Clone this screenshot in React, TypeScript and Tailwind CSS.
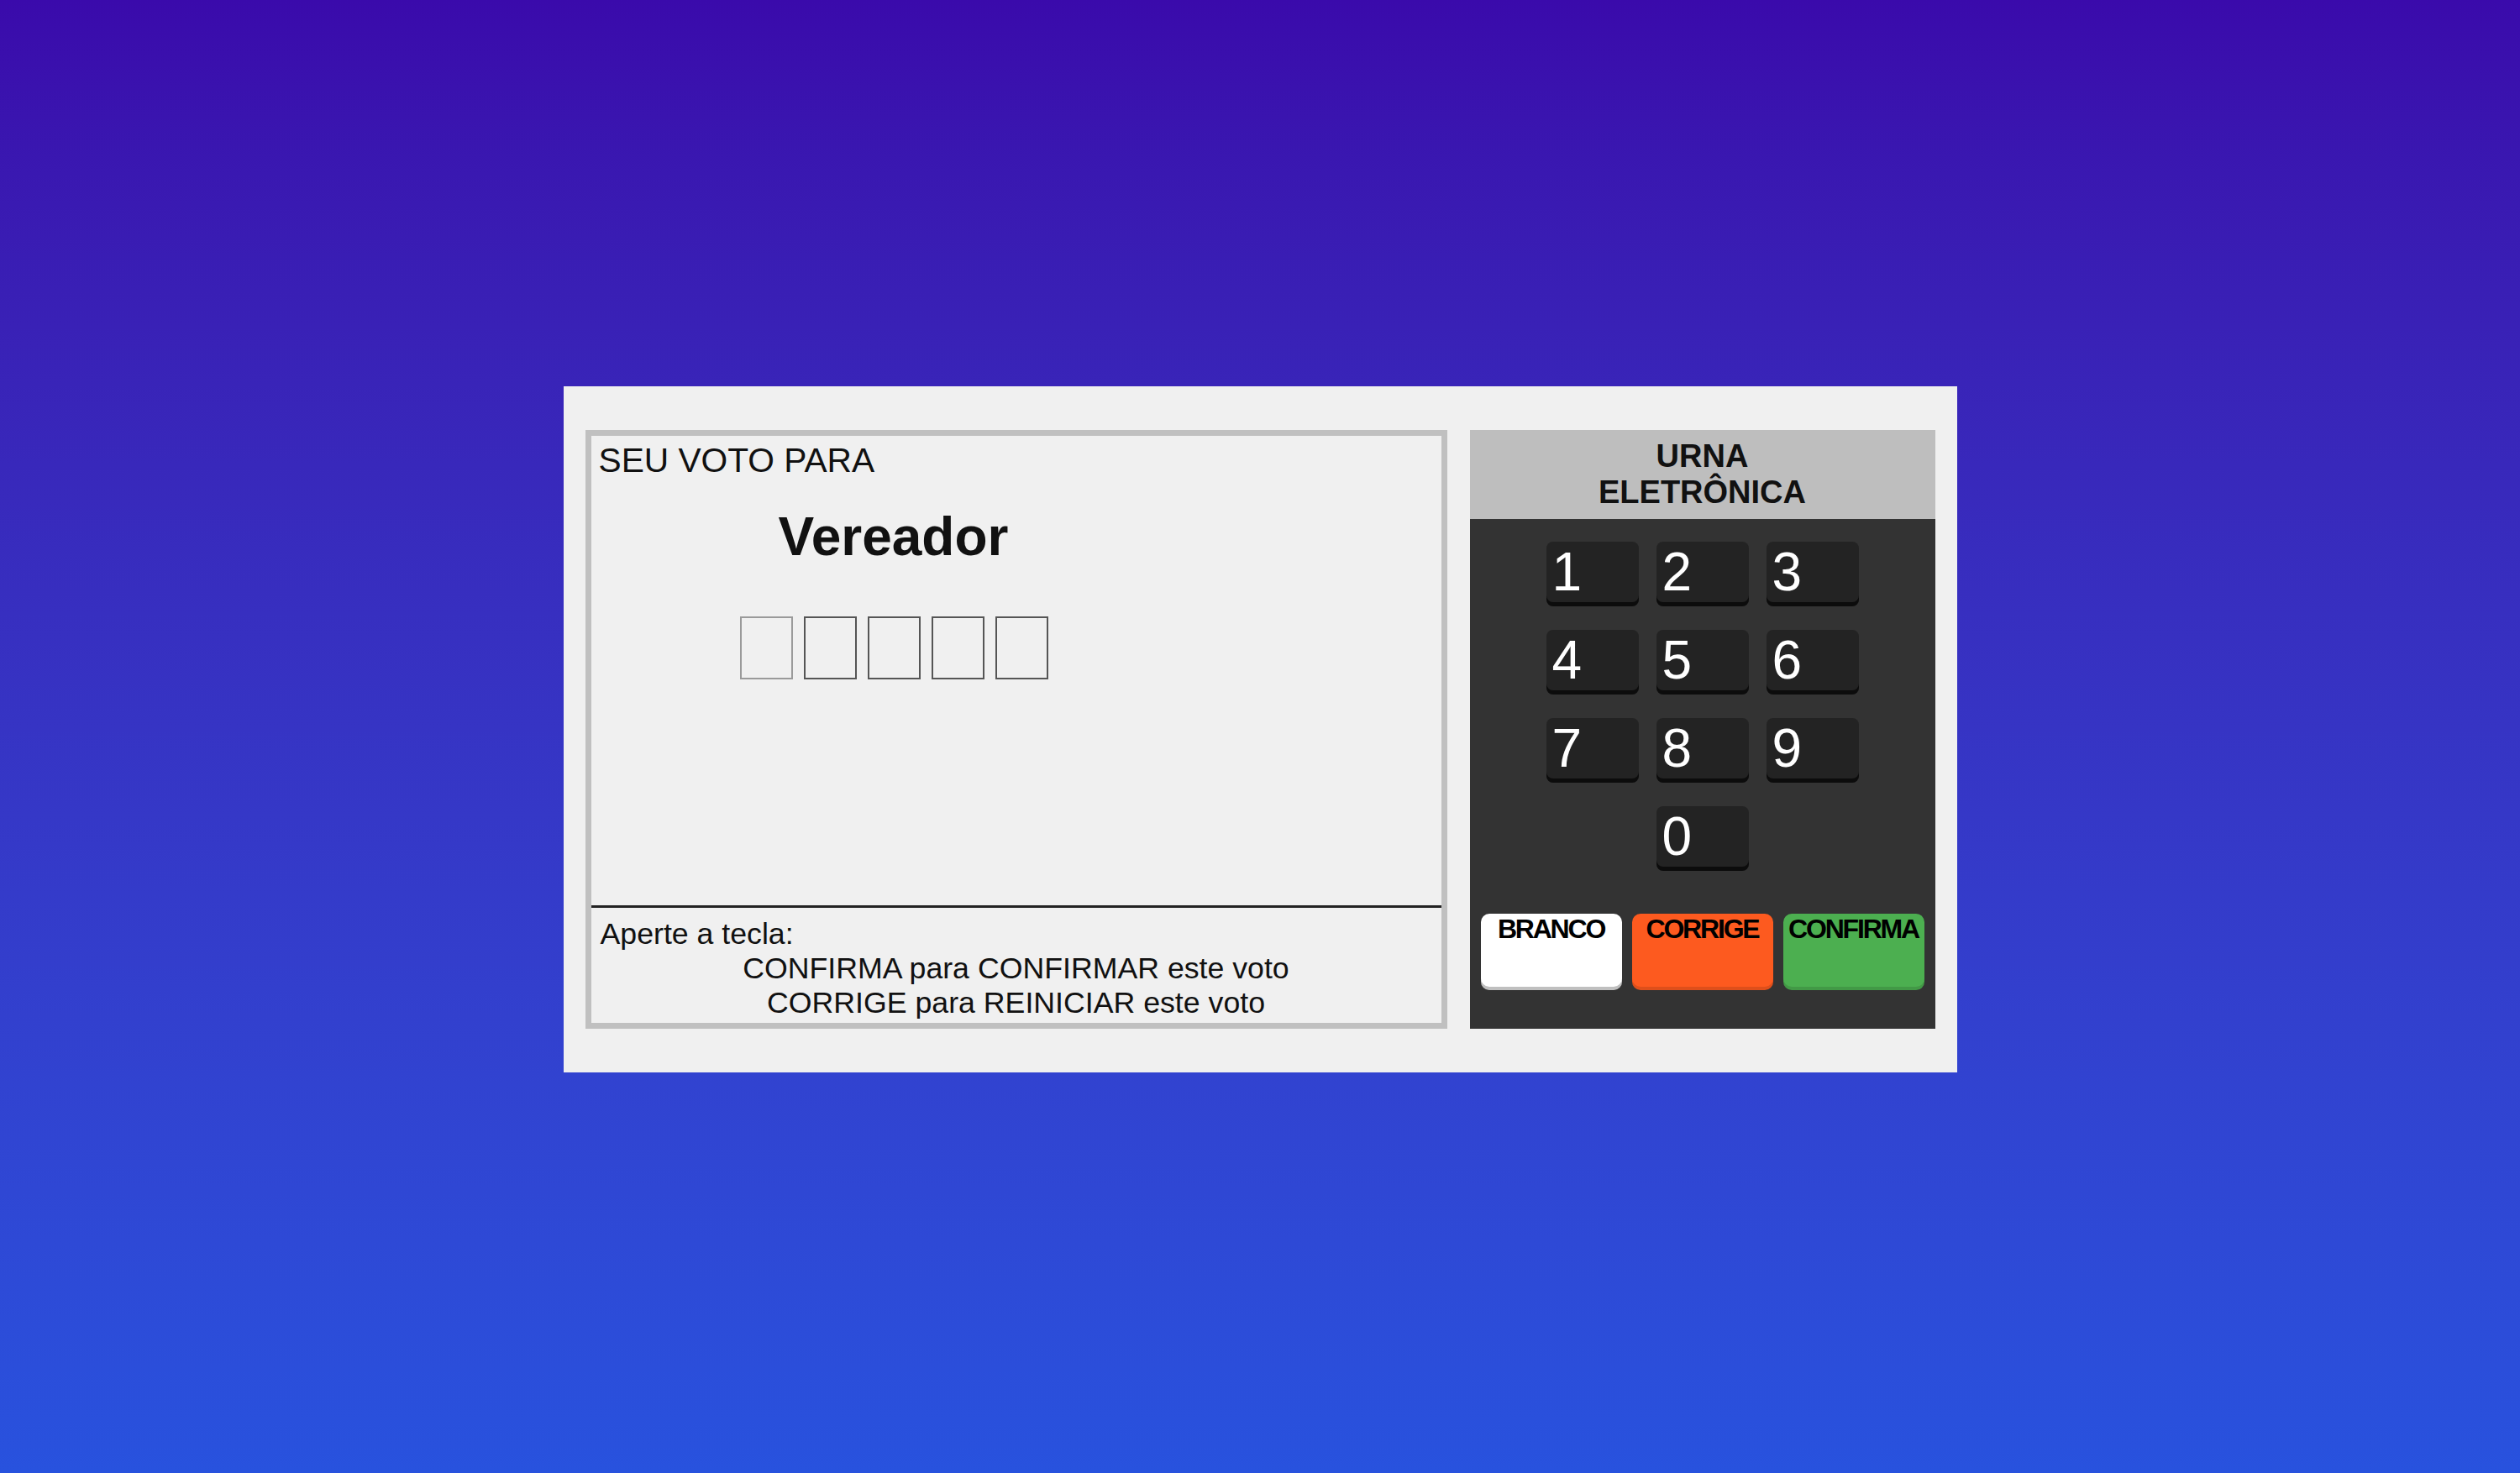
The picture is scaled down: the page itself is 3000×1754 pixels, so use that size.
import React from "react";

const font = { fontFamily: '"Liberation Sans", Arial, sans-serif' };

function Key({ n, className = "" }: { n: string; className?: string }) {
  return (
    <div
      className={
        "h-[77px] rounded-[8px] bg-[#232323] text-white text-[64px] leading-[73px] pl-[7px] shadow-[inset_0_-5px_0_rgba(0,0,0,0.65)] " +
        className
      }
    >
      {n}
    </div>
  );
}

export default function App() {
  return (
    <div
      className="min-h-screen w-full flex items-center justify-center pb-[17px] bg-gradient-to-b from-[#3a0aab] to-[#2852de]"
      style={font}
    >
      <div className="flex gap-[27px] bg-[#f0f0f0] px-[26px] py-[52px]">
        {/* Screen */}
        <div className="w-[1026px] h-[713px] border-[7px] border-[#c0c0c0] bg-[#f0f0f0] flex flex-col text-[#111]">
          <div className="flex-1 pt-[6px] pl-[9px] flex flex-col items-start">
            <div className="text-[40.7px] leading-[46px]">SEU VOTO PARA</div>
            <div className="mt-[32px] ml-[214px] text-[64px] leading-[73px] font-bold">Vereador</div>
            <div className="mt-[58px] ml-[168px] flex gap-[13px]">
              <div className="w-[63px] h-[75px] border-2 border-[#9a9a9a]" />
              <div className="w-[63px] h-[75px] border-2 border-[#555]" />
              <div className="w-[63px] h-[75px] border-2 border-[#555]" />
              <div className="w-[63px] h-[75px] border-2 border-[#555]" />
              <div className="w-[63px] h-[75px] border-2 border-[#555]" />
            </div>
          </div>
          <div className="border-t-[3px] border-[#222] pt-[11px] pb-[3px] px-[11px] text-[35.7px] leading-[41px]">
            <div>Aperte a tecla:</div>
            <div className="text-center">CONFIRMA para CONFIRMAR este voto</div>
            <div className="text-center">CORRIGE para REINICIAR este voto</div>
          </div>
        </div>

        {/* Keypad */}
        <div className="w-[554px] h-[713px] bg-[#333] flex flex-col">
          <div className="h-[106px] bg-[#bebebe] flex items-center justify-center text-center font-bold text-[38px] leading-[43px] text-[#111]">
            <div>
              URNA
              <br />
              ELETRÔNICA
            </div>
          </div>
          <div className="mt-[27px] grid grid-cols-[110px_110px_110px] justify-center gap-x-[21px] gap-y-[28px]">
            <Key n="1" />
            <Key n="2" />
            <Key n="3" />
            <Key n="4" />
            <Key n="5" />
            <Key n="6" />
            <Key n="7" />
            <Key n="8" />
            <Key n="9" />
            <Key n="0" className="col-start-2" />
          </div>
          <div className="mt-[51px] grid grid-cols-3 gap-[12px] px-[13px]">
            <div className="h-[91px] rounded-[10px] bg-white text-center text-black font-bold text-[32px] leading-[37px] tracking-[-2.2px] shadow-[inset_0_-4px_0_rgba(0,0,0,0.25)]">
              BRANCO
            </div>
            <div className="h-[91px] rounded-[10px] bg-[#fd5a1f] text-center text-black font-bold text-[32px] leading-[37px] tracking-[-2.2px] shadow-[inset_0_-4px_0_rgba(0,0,0,0.12)]">
              CORRIGE
            </div>
            <div className="h-[91px] rounded-[10px] bg-[#4caf50] text-center text-black font-bold text-[32px] leading-[37px] tracking-[-2.2px] shadow-[inset_0_-4px_0_rgba(0,0,0,0.12)]">
              CONFIRMA
            </div>
          </div>
        </div>
      </div>
    </div>
  );
}
